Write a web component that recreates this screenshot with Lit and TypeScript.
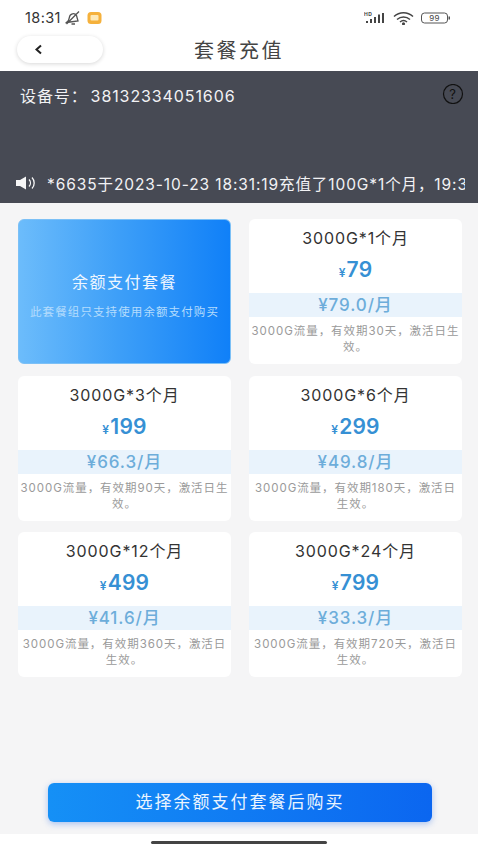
import { LitElement, html, css } from "lit";
import { customElement } from "lit/decorators.js";

const plans = [
  { name: "3000G*1个月", price: "79", per: "¥79.0/月", desc: "3000G流量，有效期30天，激活日生效。" },
  { name: "3000G*3个月", price: "199", per: "¥66.3/月", desc: "3000G流量，有效期90天，激活日生效。" },
  { name: "3000G*6个月", price: "299", per: "¥49.8/月", desc: "3000G流量，有效期180天，激活日生效。" },
  { name: "3000G*12个月", price: "499", per: "¥41.6/月", desc: "3000G流量，有效期360天，激活日生效。" },
  { name: "3000G*24个月", price: "799", per: "¥33.3/月", desc: "3000G流量，有效期720天，激活日生效。" },
];

@customElement("app-root")
export class AppRoot extends LitElement {
  static styles = css`
    :host {
      display: block;
      width: 478px;
      height: 850px;
      overflow: hidden;
      background: #fff;
      font-family: Inter, "Noto Sans CJK SC", sans-serif;
      color: #333;
    }
    .page { display: flex; flex-direction: column; height: 850px; }
    .status {
      height: 35px;
      flex: none;
      display: flex;
      align-items: center;
      justify-content: space-between;
      padding: 0 27px 0 25px;
      font-size: 14.5px;
      letter-spacing: 0.4px;
      color: #333;
      box-sizing: border-box;
    }
    .status-left, .status-right { display: flex; align-items: center; gap: 4px; }
    .nav {
      height: 36px;
      flex: none;
      position: relative;
      display: flex;
      align-items: center;
      justify-content: center;
      font-size: 20px;
      letter-spacing: 2.5px;
      color: #444;
    }
    .back {
      position: absolute;
      left: 17px;
      top: 1px;
      width: 86px;
      height: 27px;
      border-radius: 14px;
      background: #fff;
      box-shadow: 0 1px 4px rgba(0, 0, 0, 0.16);
      display: flex;
      align-items: center;
      padding-left: 17px;
      box-sizing: border-box;
    }
    .title { margin-top: -8px; }
    .dark {
      height: 132px;
      flex: none;
      background: #474a54;
      color: #f2f2f4;
      display: flex;
      flex-direction: column;
      justify-content: space-between;
      box-sizing: border-box;
      padding: 13px 0 9px 0;
    }
    .device {
      display: flex;
      justify-content: space-between;
      align-items: flex-start;
      padding: 0 13px 0 20px;
      font-size: 16px;
      letter-spacing: 0.9px;
    }
    .device span { margin-top: -1px; }
    .device b { font-weight: 400; margin-left: 3px; }
    .ticker {
      display: flex;
      align-items: center;
      gap: 10px;
      padding-left: 16px;
      width: 465px;
      box-sizing: border-box;
      overflow: hidden;
      white-space: nowrap;
      font-size: 15.5px;
      letter-spacing: 0.9px;
    }
    .ticker svg { flex: none; }
    .ticker span { overflow: hidden; }
    .body {
      flex: 1;
      background: #f5f5f6;
      position: relative;
      padding: 16px 16px 0 18px;
      box-sizing: border-box;
    }
    .grid {
      display: grid;
      grid-template-columns: 213px 213px;
      grid-auto-rows: 145px;
      column-gap: 18px;
      row-gap: 11.5px;
    }
    .card {
      background: #fff;
      border-radius: 6px;
      display: flex;
      flex-direction: column;
      align-items: center;
      overflow: hidden;
      text-align: center;
    }
    .promo {
      background: linear-gradient(90deg, #6cbcfb 0%, #3fa0f8 45%, #1080f8 100%);
      border: 1px solid #7cc0f6;
      box-sizing: border-box;
      color: #eef6ff;
      justify-content: center;
      gap: 12px;
    }
    .promo-title { font-size: 16px; letter-spacing: 1.5px; margin-top: 6px; line-height: 22px; }
    .promo-sub { font-size: 11.5px; letter-spacing: 1.1px; color: #b4dcfd; line-height: 14px; white-space: nowrap; }
    .name { font-size: 16px; letter-spacing: 0.9px; line-height: 20px; margin-top: 9px; color: #333; }
    .price {
      font-size: 21px;
      font-weight: 600;
      color: #3690d4;
      line-height: 26px;
      margin-top: 9px;
      letter-spacing: 0.2px;
    }
    .price small { font-size: 12px; font-weight: 600; margin-right: 1px; }
    .per {
      width: 100%;
      height: 24px;
      line-height: 24px;
      margin-top: 7px;
      background: #e9f3fc;
      color: #6dadda;
      font-size: 17px;
      font-weight: 500;
      letter-spacing: 0.9px;
    }
    .desc {
      font-size: 11.5px;
      letter-spacing: 0.95px;
      line-height: 16px;
      color: #9a9a9a;
      margin-top: 6px;
      width: 100%;
      box-sizing: border-box;
      padding: 0 1px;
    }
    .pad .desc { padding: 0 3px; }
    .buy {
      position: absolute;
      left: 48px;
      top: 580px;
      width: 384px;
      height: 39px;
      border-radius: 6px;
      background: linear-gradient(90deg, #1590f6, #0b66f0);
      box-shadow: 0 2px 6px rgba(30, 100, 230, 0.35);
      color: #eaf4ff;
      font-size: 17px;
      letter-spacing: 2px;
      display: flex;
      align-items: center;
      justify-content: center;
      padding-bottom: 4px;
      box-sizing: border-box;
    }
    .home {
      height: 16px;
      flex: none;
      display: flex;
      justify-content: center;
      align-items: center;
      background: #fff;
    }
    .home i { display: block; width: 176px; height: 3px; border-radius: 2px; background: #444; }
  `;

  render() {
    return html`<div class="page">
      <div class="status">
        <div class="status-left">
          <span>18:31</span>
          <svg width="16" height="15" viewBox="0 0 16 15" fill="none" stroke="#555" stroke-width="1.3">
            <path d="M1.500 12.500 13 11 11.500 5.500a3.800 3.800 0 0 0-7 1.500L3.500 10.500zM1.500 14 14 1.500M6.500 14h3.500" />
          </svg>
          <svg width="15" height="14" viewBox="0 0 15 14" style="margin-left:2px">
            <rect x="0.500" y="1" width="14" height="12" rx="3.500" fill="#f5b13c" />
            <rect x="3.500" y="4" width="8" height="5.500" rx="1" fill="#fde9b8" />
          </svg>
        </div>
        <div class="status-right">
          <svg width="23" height="14" viewBox="0 0 23 14" fill="#444">
            <text x="0" y="5" font-size="5" font-family="Inter" font-weight="700">HD</text>
            <rect x="2" y="10" width="2" height="2" />
            <rect x="6" y="8" width="2" height="4" />
            <rect x="10" y="6" width="2" height="6" />
            <rect x="14" y="3.500" width="2" height="8.500" />
            <rect x="18" y="2" width="2" height="10" />
          </svg>
          <svg width="22" height="14" viewBox="0 0 22 14" fill="none" stroke="#444" stroke-width="1.500" style="margin-left:2px">
            <path d="M1 5.500a14 14 0 0 1 19 0M4 8.500a10 10 0 0 1 13 0M7 11a5.500 5.500 0 0 1 7 0" />
            <circle cx="10.500" cy="12.800" r="0.800" fill="#444" />
          </svg>
          <svg width="30" height="12" viewBox="0 0 30 12" style="margin-left:2px">
            <rect x="0.500" y="1" width="26" height="10" rx="3" fill="none" stroke="#555" />
            <rect x="27.500" y="4.500" width="1.500" height="3" fill="#555" />
            <text x="13.500" y="9" font-size="8" font-family="Inter" text-anchor="middle" fill="#444">99</text>
          </svg>
        </div>
      </div>
      <div class="nav">
        <div class="back">
          <svg width="9" height="11" viewBox="0 0 9 11" fill="none" stroke="#222" stroke-width="2">
            <path d="M7 1.500 2.500 5.500 7 9.500" />
          </svg>
        </div>
        <div class="title">套餐充值</div>
      </div>
      <div class="dark">
        <div class="device">
          <span>设备号：<b>38132334051606</b></span>
          <svg width="24" height="20" viewBox="0 0 24 20" fill="none" stroke="#111" stroke-width="1.200">
            <circle cx="12" cy="10" r="9.500" />
            <text x="12" y="14.500" font-size="13" font-family="Inter" text-anchor="middle" fill="#111" stroke="none">?</text>
          </svg>
        </div>
        <div class="ticker">
          <svg width="21" height="14" viewBox="0 0 21 14">
            <path d="M0 4h4l6-3.500v13L4 10H0z" fill="#f6f6f6" />
            <path d="M13 3.500a5 5 0 0 1 0 7M16 1.500a8 8 0 0 1 0 11" fill="none" stroke="#f6f6f6" stroke-width="1.300" />
          </svg>
          <span>*6635于2023-10-23 18:31:19充值了100G*1个月，19:31:19</span>
        </div>
      </div>
      <div class="body">
        <div class="grid">
          <div class="card promo">
            <div class="promo-title">余额支付套餐</div>
            <div class="promo-sub">此套餐组只支持使用余额支付购买</div>
          </div>
          ${plans.map(
            (p, i) => html`<div class="card ${i >= 2 ? "pad" : ""}">
              <div class="name">${p.name}</div>
              <div class="price"><small>¥</small>${p.price}</div>
              <div class="per">${p.per}</div>
              <div class="desc">${p.desc}</div>
            </div>`
          )}
        </div>
        <div class="buy">选择余额支付套餐后购买</div>
      </div>
      <div class="home"><i></i></div>
    </div>`;
  }
}
